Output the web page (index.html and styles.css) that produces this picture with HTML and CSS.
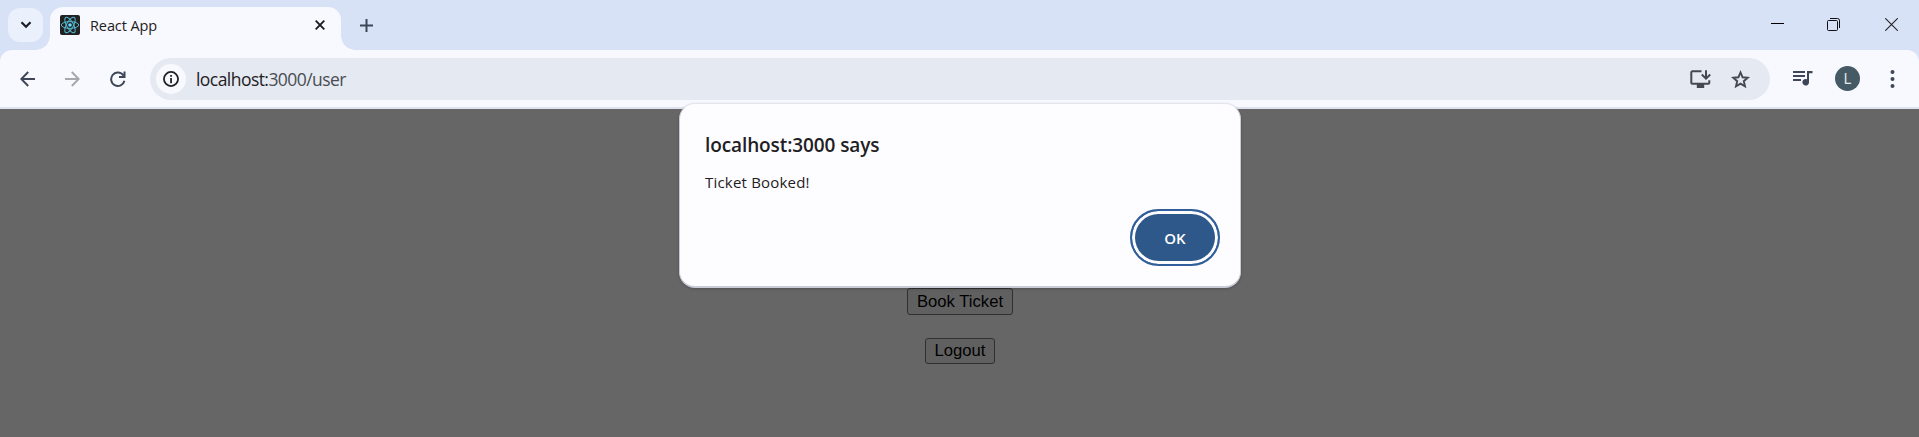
FILE: index.html
```
<!DOCTYPE html>
<html lang="en">
<head>
<meta charset="utf-8">
<title>React App</title>
<link rel="stylesheet" href="styles.css">
</head>
<body>
<header class="tab-strip">
  <div class="tab-search"><svg width="12" height="8" viewBox="0 0 12 8"><path d="M1.5 1.3 6 5.7l4.5-4.4" fill="none" stroke="#1b1c20" stroke-width="2.2"/></svg></div>
  <div class="tab">
    <svg class="favicon" width="20" height="20" viewBox="0 0 20 20"><rect width="20" height="20" rx="2" fill="#222"/><g fill="none" stroke="#53b8d2" stroke-width="1"><ellipse cx="10" cy="10" rx="8.7" ry="3.4"/><ellipse cx="10" cy="10" rx="8.7" ry="3.4" transform="rotate(60 10 10)"/><ellipse cx="10" cy="10" rx="8.7" ry="3.4" transform="rotate(120 10 10)"/></g><circle cx="10" cy="10" r="1.8" fill="#61dafb"/></svg>
    <span class="tab-title">React App</span>
    <svg class="tab-close" width="10" height="10" viewBox="0 0 10 10"><path d="m.7.7 8.6 8.6m0-8.6L.7 9.3" stroke="#1b1c20" stroke-width="1.9"/></svg>
  </div>
  <svg class="new-tab" width="13" height="13" viewBox="0 0 13 13"><path d="M6.5 0v13M0 6.5h13" stroke="#3d4757" stroke-width="2"/></svg>
  <div class="window-controls">
    <svg width="13" height="13" viewBox="0 0 13 13"><path d="M0 5.5h13" stroke="#000"/></svg>
    <svg width="13" height="13" viewBox="0 0 13 13"><g fill="none" stroke="#111"><rect x=".5" y="2.5" width="10" height="10" rx="1"/><path d="M3 .5h7.5a2 2 0 0 1 2 2V10"/></g></svg>
    <svg width="13" height="13" viewBox="0 0 13 13"><path d="m.3.3 12.4 12.4m0-12.4L.3 12.7" stroke="#222" stroke-width="1.1"/></svg>
  </div>
</header>
<nav class="toolbar">
  <svg class="back" width="15" height="16" viewBox="0 0 15 16"><path d="M15 8H1.5M8.2 1 1.3 8l6.9 7" fill="none" stroke="#3d4757" stroke-width="2"/></svg>
  <svg class="forward" width="15" height="16" viewBox="0 0 15 16"><path d="M0 8h13.500M6.800 1l6.900 7-6.900 7" fill="none" stroke="#a6a8ad" stroke-width="2"/></svg>
  <svg class="reload" width="16" height="16" viewBox="0 0 16 16"><path d="M13.600 4.800A6.700 6.700 0 1 0 14.400 9.700" fill="none" stroke="#3d4757" stroke-width="2"/><path d="M15.500.500v6.500H9V5h4.500V.500z" fill="#3d4757"/></svg>
  <div class="omnibox">
    <div class="site-info"><svg width="16" height="16" viewBox="0 0 17 17"><circle cx="8.500" cy="8.500" r="7.500" fill="none" stroke="#1f2023" stroke-width="1.900"/><path d="M7.600 7.500h1.900V13H7.600zM7.600 4.200h1.900v2H7.600z" fill="#1f2023"/></svg></div>
    <span class="url">localhost:<span class="url-path">3000/user</span></span>
    <svg class="install" width="21" height="18" viewBox="0 0 21 18"><path d="M11.500 1.300H2.300a1 1 0 0 0-1 1v10.500a1 1 0 0 0 1 1h16a1 1 0 0 0 1-1v-2.500" fill="none" stroke="#45484e" stroke-width="2"/><path d="M6.800 14h7.400v4H6.800z" fill="#45484e"/><path d="M16 .3v8m-4.200-3.800L16 8.700l4.200-4.200" fill="none" stroke="#45484e" stroke-width="2"/></svg>
    <svg class="star" width="19" height="18" viewBox="0 0 19 18"><path d="m9.500 2.400 2.100 4.900 5.200.4-4 3.500 1.200 5.100-4.500-2.700-4.500 2.700 1.200-5.100-4-3.500 5.200-.4z" fill="none" stroke="#45484e" stroke-width="1.900"/></svg>
  </div>
  <svg class="media" width="20" height="15" viewBox="0 0 20 15"><path d="M0 1h12M0 5h12M0 9h8" stroke="#3d4757" stroke-width="2"/><path d="M19.500 0v2.200H16v9A3.300 3.300 0 1 1 14 8.200V0z" fill="#3d4757"/></svg>
  <div class="avatar">L</div>
  <svg class="menu" width="5" height="18" viewBox="0 0 5 18"><g fill="#3d4757"><circle cx="2.500" cy="2" r="2"/><circle cx="2.500" cy="9" r="2"/><circle cx="2.500" cy="16" r="2"/></g></svg>
</nav>
<main class="page">
  <button class="page-button">Book Ticket</button>
  <button class="page-button logout">Logout</button>
</main>
<section class="dialog" role="alertdialog">
  <h1 class="dialog-title">localhost:3000 says</h1>
  <p class="dialog-text">Ticket Booked!</p>
  <button class="ok">OK</button>
</section>
</body>
</html>
```
FILE: styles.css
```
* { box-sizing: border-box; }
body {
  margin: 0;
  height: 437px;
  overflow: hidden;
  display: flex;
  flex-direction: column;
  background: #d8e2f7;
  font-family: "Open Sans", "Noto Sans", sans-serif;
  color: #1f2023;
}
svg { display: block; flex: none; }
.tab-strip {
  height: 50px;
  flex: none;
  display: flex;
  padding-left: 8px;
}
.tab-search {
  width: 35px;
  height: 34px;
  margin: 8px 7px 0 0;
  border-radius: 12px;
  background: #ebf0fd;
  display: flex;
  align-items: center;
  justify-content: center;
}
.tab {
  position: relative;
  width: 291px;
  height: 43px;
  margin-top: 7px;
  padding: 0 16px 7px 10px;
  border-radius: 13px 13px 0 0;
  background: #f8f9fe;
  display: flex;
  align-items: center;
}
.tab::before, .tab::after {
  content: "";
  position: absolute;
  bottom: 0;
  width: 14px;
  height: 14px;
}
.tab::before {
  left: -14px;
  background: radial-gradient(circle at 0 0, transparent 13.5px, #f8f9fe 14px);
}
.tab::after {
  right: -14px;
  background: radial-gradient(circle at 100% 0, transparent 13.5px, #f8f9fe 14px);
}
.tab-title {
  margin-left: 10px;
  padding-top: 2px;
  font-size: 14.5px;
  line-height: 20px;
  letter-spacing: -0.1px;
  white-space: nowrap;
}
.tab-close { margin-left: auto; }
.new-tab { margin: 19px 0 0 19px; }
.window-controls {
  margin: 18px 21px 0 auto;
  display: flex;
  gap: 44px;
}
.window-controls svg:nth-child(2) { margin: 0 1px 0 -1px; }
.toolbar {
  height: 59px;
  flex: none;
  display: flex;
  align-items: center;
  border-bottom: 2px solid #dfe3ef;
  border-radius: 12px 12px 0 0;
  background: #f8f9fe;
}
.back { margin-left: 20px; }
.forward { margin-left: 30px; }
.reload { margin-left: 30px; }
.omnibox {
  width: 1620px;
  height: 42px;
  margin-left: 24px;
  padding: 0 20px 0 6px;
  border-radius: 21px;
  background: #e5e9f2;
  display: flex;
  align-items: center;
}
.site-info {
  width: 30px;
  height: 30px;
  border-radius: 50%;
  background: #f8f9fe;
  display: flex;
  align-items: center;
  justify-content: center;
}
.url {
  margin-left: 10px;
  padding-top: 1px;
  font-size: 17.5px;
  line-height: 24px;
  letter-spacing: -0.55px;
}
.url-path { color: #4a4d53; }
.install { margin-left: auto; }
.star { margin-left: 20px; }
.media { margin-left: 23px; }
.avatar {
  width: 25px;
  height: 25px;
  margin-left: 22px;
  border-radius: 50%;
  background: #455a64;
  color: #e4e8ea;
  font: 14px/26px Roboto, sans-serif;
  text-align: center;
}
.menu { margin-left: 30px; }
.page {
  flex: 1;
  padding: 179px 0 0 1px;
  display: flex;
  flex-direction: column;
  align-items: center;
  background: #666;
}
.page-button {
  width: 106px;
  height: 27px;
  padding: 0;
  border: 1px solid #303030;
  border-radius: 3px;
  background: #606060;
  color: #000;
  font: 16.667px/20px "Liberation Sans", Arial, sans-serif;
}
.logout {
  width: 70px;
  height: 26px;
  margin-top: 23px;
}
.dialog {
  position: absolute;
  left: 679px;
  top: 103px;
  width: 562px;
  height: 185px;
  padding: 27px 20px 20px 25px;
  border: 1px solid #c9ccd4;
  border-top-color: #e2e5ef;
  border-bottom-width: 2px;
  border-radius: 16px;
  background: #fdfdff;
  box-shadow: 0 1px 3px rgba(0, 0, 0, .2);
  display: flex;
  flex-direction: column;
}
.dialog-title {
  margin: 0;
  font-size: 19px;
  font-weight: 600;
  line-height: 28px;
  letter-spacing: -0.1px;
}
.dialog-text {
  margin: 11px 0 0;
  font-size: 15px;
  line-height: 24px;
  letter-spacing: 0.2px;
}
.ok {
  align-self: flex-end;
  width: 90px;
  height: 57px;
  margin-top: 15px;
  padding: 0;
  border: 2px solid #315f9c;
  border-radius: 29px;
  background: #2e5889;
  box-shadow: inset 0 0 0 3px #fdfdff;
  color: #fff;
  font: 600 15px/20px "Open Sans", sans-serif;
}
```
